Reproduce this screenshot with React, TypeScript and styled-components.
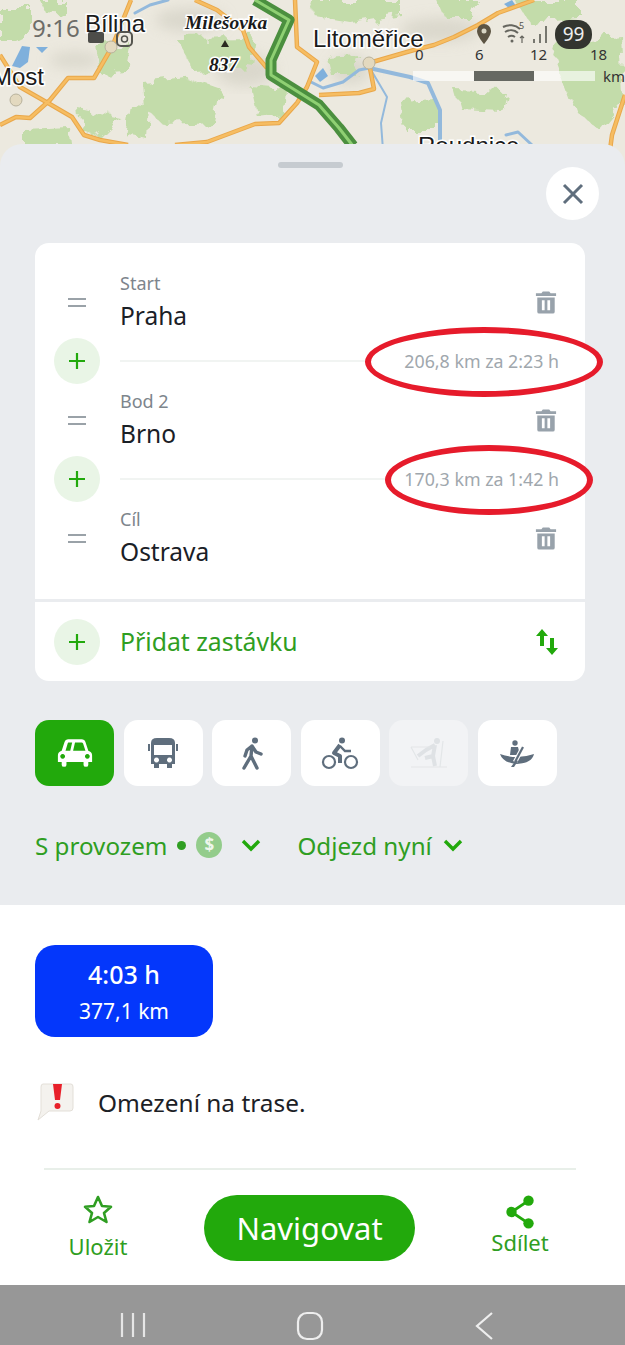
import styled, { createGlobalStyle } from "styled-components";

const GREEN = "#22a90c";
const TEXT_GREEN = "#2f9e22";
const SLATE = "#5f6e7d";

const GlobalStyle = createGlobalStyle`
  html, body {
    margin: 0;
    padding: 0;
    width: 625px;
    height: 1345px;
    overflow: hidden;
    background: #fff;
    font-family: "Noto Sans", "Open Sans", sans-serif;
  }
  * { box-sizing: border-box; }
`;

const Screen = styled.div`
  width: 625px;
  height: 1345px;
  display: flex;
  flex-direction: column;
  overflow: hidden;
`;

const MapArea = styled.div`
  position: relative;
  flex: none;
  height: 144px;
  background: #ece9df;
`;

const MapDrawing = styled.svg`
  display: block;
  width: 625px;
  height: 170px;
`;

const MapLabel = styled.span<{ $x: number; $y: number; $peak?: boolean }>`
  position: absolute;
  left: ${(p) => p.$x}px;
  top: ${(p) => p.$y}px;
  font-family: ${(p) => (p.$peak ? '"Liberation Serif", serif' : '"Liberation Sans", sans-serif')};
  font-size: ${(p) => (p.$peak ? 19.500 : 24)}px;
  font-weight: ${(p) => (p.$peak ? 700 : 400)};
  font-style: ${(p) => (p.$peak ? "italic" : "normal")};
  line-height: 1;
  color: #1b1b1b;
  white-space: nowrap;
  -webkit-text-stroke: 3px #fff;
  paint-order: stroke fill;
`;

const ScaleNumber = styled.span<{ $x: number; $y: number }>`
  position: absolute;
  left: ${(p) => p.$x}px;
  top: ${(p) => p.$y}px;
  font-size: 15px;
  line-height: 1;
  color: #333;
`;

const ScaleBar = styled.div`
  position: absolute;
  left: 413px;
  top: 71px;
  width: 182px;
  height: 10px;
  display: grid;
  grid-template-columns: repeat(3, 1fr);
  background: rgba(255, 255, 255, 0.62);
`;

const ScaleStep = styled.div<{ $dark?: boolean }>`
  background: ${(p) => (p.$dark ? "#666862" : "transparent")};
`;

const Clock = styled.span`
  position: absolute;
  left: 32px;
  top: 15px;
  font-size: 24px;
  line-height: 1.1;
  color: #6d6d68;
`;

const StatusIcons = styled.svg<{ $x: number; $w: number }>`
  position: absolute;
  left: ${(p) => p.$x}px;
  top: 16px;
  width: ${(p) => p.$w}px;
  height: 34px;
`;

const WifiBand = styled.span`
  position: absolute;
  left: 519px;
  top: 21px;
  font-size: 9px;
  line-height: 1;
  color: #55554f;
`;

const Battery = styled.span`
  position: absolute;
  left: 555px;
  top: 20px;
  width: 37px;
  height: 29px;
  border-radius: 14px;
  background: #33352f;
  color: #eee;
  font-size: 19px;
  line-height: 29px;
  text-align: center;
`;

const Sheet = styled.section`
  position: relative;
  flex: none;
  height: 761px;
  padding: 99px 40px 0 35px;
  background: #eaecef;
  border-radius: 22px 22px 0 0;
`;

const Handle = styled.div`
  position: absolute;
  left: 278px;
  top: 18px;
  width: 65px;
  height: 6px;
  border-radius: 3px;
  background: #c6cbd0;
`;

const CloseButton = styled.button`
  position: absolute;
  left: 546px;
  top: 23px;
  width: 53px;
  height: 53px;
  padding: 0;
  border: 0;
  border-radius: 50%;
  background: #fff;
  display: flex;
  align-items: center;
  justify-content: center;
`;

const RouteCard = styled.div`
  width: 550px;
  height: 438px;
  background: #fff;
  border-radius: 14px;
  margin-bottom: 39px;
  display: flex;
  flex-direction: column;
  padding-top: 20px;
`;

const StopRow = styled.div`
  height: 78px;
  padding: 0 28px 0 19px;
  display: flex;
  align-items: center;
`;

const DragColumn = styled.div`
  width: 46px;
  margin-right: 20px;
  display: flex;
  justify-content: center;
`;

const DragHandle = styled.div`
  width: 18px;
  height: 9px;
  border-top: 2px solid #9aa2a8;
  border-bottom: 2px solid #9aa2a8;
`;

const StopText = styled.div`
  flex: 1;
  display: flex;
  flex-direction: column;
  gap: 3px;
`;

const StopCaption = styled.span`
  font-size: 18px;
  line-height: 24px;
  color: #7d858c;
`;

const StopName = styled.span`
  font-size: 24.500px;
  line-height: 36px;
  color: #1a2026;
`;

const ConnectorRow = styled.div`
  height: 40px;
  padding: 0 26px 0 19px;
  display: flex;
  align-items: center;
`;

const AddCircle = styled.div`
  flex: none;
  width: 46px;
  height: 46px;
  border-radius: 50%;
  background: #e9f5e6;
  display: flex;
  align-items: center;
  justify-content: center;
`;

const ConnectorLine = styled.div`
  flex: 1;
  height: 2px;
  margin-left: 20px;
  background: #f1f4f2;
`;

const Distance = styled.div`
  position: relative;
  font-size: 17.800px;
  line-height: 24px;
  color: #a0a7ad;
  white-space: nowrap;
`;

const DistanceText = styled.span`
  position: relative;
`;

const RedRing = styled.div<{ $wide?: boolean }>`
  position: absolute;
  top: -22px;
  left: ${(p) => (p.$wide ? -39 : -19)}px;
  width: ${(p) => (p.$wide ? 238 : 208)}px;
  height: 70px;
  border: 6px solid #e61b2b;
  border-radius: 50%;
  background: #fff;
`;

const CardDivider = styled.div`
  height: 3px;
  margin-top: 22px;
  background: #eaecef;
`;

const AddStopRow = styled.div`
  flex: 1;
  padding: 0 26px 0 19px;
  display: flex;
  align-items: center;
`;

const AddStopLabel = styled.span`
  flex: 1;
  margin-left: 20px;
  margin-top: -2px;
  font-size: 24.800px;
  color: ${TEXT_GREEN};
`;

const ModeRow = styled.div`
  display: flex;
  gap: 9.600px;
  margin-bottom: 40px;
`;

const ModeButton = styled.div<{ $active?: boolean; $disabled?: boolean }>`
  width: 79px;
  height: 66px;
  border-radius: 14px;
  background: ${(p) => (p.$active ? GREEN : p.$disabled ? "#f2f3f5" : "#fff")};
  display: flex;
  align-items: center;
  justify-content: center;
`;

const OptionRow = styled.div`
  display: flex;
  align-items: center;
  height: 38px;
  font-size: 24.200px;
  color: ${TEXT_GREEN};
`;

const OptionGroup = styled.div`
  display: flex;
  align-items: center;
  margin-right: 36px;
`;

const Dot = styled.span`
  width: 9px;
  height: 9px;
  margin: 0 10px;
  border-radius: 50%;
  background: ${TEXT_GREEN};
`;

const Toll = styled.span`
  width: 26px;
  height: 26px;
  border-radius: 50%;
  background: #93cc8b;
  color: #eef6ec;
  font-size: 17px;
  font-weight: 700;
  line-height: 26px;
  text-align: center;
`;

const Chevron = styled.svg<{ $gap: number }>`
  margin-left: ${(p) => p.$gap}px;
`;

const Results = styled.section`
  flex: none;
  height: 265px;
  padding: 40px 48px 0 35px;
  background: #fff;
  display: flex;
  flex-direction: column;
`;

const RouteChip = styled.div`
  width: 178px;
  height: 92px;
  padding-top: 3px;
  border-radius: 20px;
  background: #0437fb;
  color: #fff;
  display: flex;
  flex-direction: column;
  align-items: center;
  justify-content: center;
`;

const ChipTime = styled.span`
  font-size: 25px;
  font-weight: 500;
  line-height: 37px;
`;

const ChipLength = styled.span`
  font-size: 21px;
  line-height: 37px;
`;

const WarningRow = styled.div`
  margin-top: 44px;
  height: 42px;
  display: flex;
  align-items: center;
  gap: 22px;
  font-size: 24.400px;
  color: #1c2126;
`;

const BottomBar = styled.section`
  position: relative;
  flex: none;
  height: 115px;
  padding: 25px 0 0;
  display: grid;
  grid-template-columns: 204px 211px 210px;
  background: #fff;
  &::before {
    content: "";
    position: absolute;
    left: 44px;
    right: 49px;
    top: -2px;
    height: 2px;
    background: #e8efe9;
  }
`;

const BarAction = styled.div<{ $shift: number }>`
  display: flex;
  flex-direction: column;
  align-items: center;
  gap: 8px;
  font-size: 22px;
  line-height: 28px;
  color: ${TEXT_GREEN};
  transform: translateX(${(p) => p.$shift}px);
`;

const ShareIcon = styled.svg`
  margin-bottom: -9px;
`;

const NavigateButton = styled.button`
  height: 66px;
  padding: 0;
  border: 0;
  border-radius: 33px;
  background: ${GREEN};
  color: #fff;
  font-family: inherit;
  font-size: 31px;
`;

const SystemBar = styled.nav`
  flex: none;
  height: 60px;
  padding: 26px 0 0 120px;
  background: #979797;
  display: flex;
  gap: 150px;
  align-items: flex-start;
`;

const Plus = () => (
  <svg width="18" height="18" viewBox="0 0 18 18">
    <path d="M9 1v16M1 9h16" stroke={GREEN} strokeWidth="2.200" fill="none" />
  </svg>
);

const Trash = () => (
  <svg width="22" height="25" viewBox="0 0 24 26">
    <path
      fillRule="evenodd"
      fill="#98a2ab"
      d="M1 3h6l1.500-2h7L17 3h6v3H1zM2.500 7.500h19V23a2 2 0 0 1-2 2h-15a2 2 0 0 1-2-2zM7.500 10.500v11h3v-11zM13.500 10.500v11h3v-11z"
    />
  </svg>
);

const Stop = ({ caption, name }: { caption: string; name: string }) => (
  <StopRow>
    <DragColumn>
      <DragHandle />
    </DragColumn>
    <StopText>
      <StopCaption>{caption}</StopCaption>
      <StopName>{name}</StopName>
    </StopText>
    <Trash />
  </StopRow>
);

const Connector = ({ text, wide }: { text: string; wide?: boolean }) => (
  <ConnectorRow>
    <AddCircle>
      <Plus />
    </AddCircle>
    <ConnectorLine />
    <Distance>
      <RedRing $wide={wide} />
      <DistanceText>{text}</DistanceText>
    </Distance>
  </ConnectorRow>
);

const SmallChevron = ({ gap }: { gap: number }) => (
  <Chevron $gap={gap} width="20" height="13" viewBox="0 0 20 13">
    <path d="M2 2l8 8 8-8" stroke={GREEN} strokeWidth="3.400" fill="none" />
  </Chevron>
);

const MapPicture = () => (
  <MapDrawing viewBox="0 0 625 170">
    <defs>
      <filter id="woods" x="-5%" y="-5%" width="110%" height="110%">
        <feTurbulence type="fractalNoise" baseFrequency="0.07" numOctaves="3" seed="4" />
        <feDisplacementMap in="SourceGraphic" scale="18" />
      </filter>
      <filter id="relief">
        <feGaussianBlur stdDeviation="7" />
      </filter>
    </defs>
    <rect width="625" height="170" fill="#ece9df" />
    <g fill="#d3d0c4" opacity="0.7" filter="url(#relief)">
      <ellipse cx="75" cy="60" rx="26" ry="8" />
      <ellipse cx="245" cy="70" rx="30" ry="16" />
      <ellipse cx="190" cy="20" rx="35" ry="12" />
      <ellipse cx="350" cy="70" rx="20" ry="14" />
      <ellipse cx="440" cy="30" rx="40" ry="12" />
    </g>
    <g fill="#c3dcaa" filter="url(#woods)">
      <path d="M0 7H32V30L12 40H0Z" />
      <path d="M40 0H65V14L45 12Z" />
      <path d="M96 45L131 43L125 72L100 74Z" />
      <path d="M143 82L185 77L222 90L215 122L165 124L145 110Z" />
      <path d="M175 38L255 37L250 68L195 72Z" />
      <path d="M251 87L287 90L285 115L258 118Z" />
      <path d="M310 0H400V14L350 22L315 16Z" />
      <path d="M326 58L360 56L355 74L330 74Z" />
      <path d="M400 102L438 100L438 130L405 130Z" />
      <path d="M438 0H478L470 17H445Z" />
      <path d="M455 90L505 92L500 110L460 108Z" />
      <path d="M550 42L622 36L625 100L600 130L575 110Z" />
      <path d="M80 110L120 118L100 138L82 132Z" />
      <path d="M25 130L70 128L72 144H25Z" />
      <path d="M515 0H580V20L530 24Z" />
      <path d="M130 105L150 108L148 140L125 135Z" />
    </g>
    <g fill="#7fb0dc">
      <path d="M12 66L22 46L30 47L28 62L20 68Z" />
      <path d="M36 47L48 47L42 53Z" />
      <path d="M315 76L323 68L328 76L320 82Z" />
      <path d="M504 4L512 0L516 6L510 9Z" />
    </g>
    <g fill="none" stroke="#93b9dc" strokeLinecap="round" strokeLinejoin="round">
      <path strokeWidth="3" d="M135 13L150 5L168 0" />
      <path strokeWidth="3" d="M311 82L323 88L343 82L359 70L369 68" />
      <path strokeWidth="4" d="M369 68L410 77L428 83L440 110L440 150" />
      <path strokeWidth="2" d="M371 70L387 97L381 123L383 150" />
      <path strokeWidth="3" d="M506 135L518 132L532 145" />
    </g>
    <g fill="none" stroke="#e9a74a" strokeWidth="4.500" strokeLinejoin="round">
      <path d="M131 0L112 47L94 78L68 78L50 100L30 118L16 117L0 125" />
      <path d="M0 55L20 87L48 103L72 117L84 135L100 140L128 145" />
      <path d="M195 0L217 10L243 30L249 47L267 68" />
      <path d="M295 0L297 47L317 62L307 87L297 103L279 123L255 124L207 142L175 145" />
      <path d="M369 63L414 50L434 45L454 37L478 25L498 13L534 0" />
      <path d="M369 63L374 89L359 93L319 95" />
      <path d="M625 95L612 135L610 150" />
    </g>
    <g fill="none" stroke="#f6bd62" strokeWidth="2.500" strokeLinejoin="round">
      <path d="M131 0L112 47L94 78L68 78L50 100L30 118L16 117L0 125" />
      <path d="M0 55L20 87L48 103L72 117L84 135L100 140L128 145" />
      <path d="M195 0L217 10L243 30L249 47L267 68" />
      <path d="M295 0L297 47L317 62L307 87L297 103L279 123L255 124L207 142L175 145" />
      <path d="M369 63L414 50L434 45L454 37L478 25L498 13L534 0" />
      <path d="M369 63L374 89L359 93L319 95" />
      <path d="M625 95L612 135L610 150" />
    </g>
    <g fill="#e3d9bf" stroke="#b8b29c" strokeWidth="1">
      <circle cx="111" cy="47" r="6" />
      <circle cx="16" cy="100" r="6" />
      <circle cx="369" cy="63" r="6" />
    </g>
    <path d="M225 40l4 7h-8z" fill="#2a2a20" />
    <path
      d="M255 0L289 20L271 60L271 75L319 105L339 128L353 146"
      fill="none"
      stroke="#4b8f3f"
      strokeWidth="11"
      strokeLinejoin="round"
    />
    <path
      d="M255 0L289 20L271 60L271 75L319 105L339 128L353 146"
      fill="none"
      stroke="#8fd073"
      strokeWidth="3"
      strokeLinejoin="round"
    />
  </MapDrawing>
);

export default function App() {
  return (
    <Screen>
      <GlobalStyle />
      <MapArea>
        <MapPicture />
        <MapLabel $x={85} $y={12}>Bílina</MapLabel>
        <MapLabel $x={185} $y={13} $peak>Milešovka</MapLabel>
        <MapLabel $x={209} $y={55} $peak>837</MapLabel>
        <MapLabel $x={-8} $y={65}>Most</MapLabel>
        <MapLabel $x={313} $y={27}>Litoměřice</MapLabel>
        <MapLabel $x={418} $y={134}>Roudnice</MapLabel>
        <Clock>9:16</Clock>
        <StatusIcons $x={30} $w={110} viewBox="0 0 110 34">
          <rect x="58" y="16" width="16" height="11" rx="2" fill="#4d4d49" />
          <rect x="87" y="16" width="15" height="14" rx="4" fill="none" stroke="#55554f" strokeWidth="2" />
          <circle cx="94.500" cy="23" r="3" fill="none" stroke="#55554f" strokeWidth="1.500" />
        </StatusIcons>
        <StatusIcons $x={474} $w={80} viewBox="0 0 80 34">
          <path d="M10 8a7 7 0 0 1 7 7c0 5-7 13-7 13s-7-8-7-13a7 7 0 0 1 7-7z" fill="#5c5443" />
          <circle cx="10" cy="15" r="2.500" fill="#d8d5c4" />
          <path d="M29 11a15 15 0 0 1 17 2M31 16a11 11 0 0 1 13 1M34 21a6 6 0 0 1 7 0" stroke="#66665f" strokeWidth="2" fill="none" />
          <circle cx="38" cy="25" r="1.500" fill="#66665f" />
          <path d="M48 27V20M46 22l2-2 2 2" stroke="#66665f" strokeWidth="1.200" fill="none" />
          <path d="M60 27v-4M66 27v-9M72 27v-17" stroke="#77776f" strokeWidth="2" fill="none" />
        </StatusIcons>
        <WifiBand>5</WifiBand>
        <Battery>99</Battery>
        <ScaleNumber $x={415} $y={47}>0</ScaleNumber>
        <ScaleNumber $x={475} $y={47}>6</ScaleNumber>
        <ScaleNumber $x={530} $y={47}>12</ScaleNumber>
        <ScaleNumber $x={590} $y={47}>18</ScaleNumber>
        <ScaleBar>
          <ScaleStep />
          <ScaleStep $dark />
          <ScaleStep />
        </ScaleBar>
        <ScaleNumber $x={603} $y={69}>km</ScaleNumber>
      </MapArea>

      <Sheet>
        <Handle />
        <CloseButton aria-label="Zavřít">
          <svg width="22" height="22" viewBox="0 0 22 22">
            <path d="M2 2l18 18M20 2L2 20" stroke={SLATE} strokeWidth="3" fill="none" />
          </svg>
        </CloseButton>

        <RouteCard>
          <Stop caption="Start" name="Praha" />
          <Connector text="206,8 km za 2:23 h" wide />
          <Stop caption="Bod 2" name="Brno" />
          <Connector text="170,3 km za 1:42 h" />
          <Stop caption="Cíl" name="Ostrava" />
          <CardDivider />
          <AddStopRow>
            <AddCircle>
              <Plus />
            </AddCircle>
            <AddStopLabel>Přidat zastávku</AddStopLabel>
            <svg width="24" height="28" viewBox="0 0 24 28">
              <path d="M7 1l6 7H9v10H5V8H1zM15 10h4v10h4l-6 7-6-7h4z" fill={GREEN} />
            </svg>
          </AddStopRow>
        </RouteCard>

        <ModeRow>
          <ModeButton $active>
            <svg width="38" height="32" viewBox="0 0 40 33">
              <path
                fillRule="evenodd"
                fill="#fff"
                d="M6 14L9 5Q10 2 13 2H27Q30 2 31 5L34 14Q38 15 38 19V26H34V29Q34 31 31.500 31Q29 31 29 29V26H11V29Q11 31 8.500 31Q6 31 6 29V26H2V19Q2 15 6 14ZM10 14H15L17 5.500H13Q12.500 5.500 12.300 6.500ZM18 14H31L28.500 6.500Q28 5.500 27 5.500H20ZM7 17.500a2.500 2.500 0 1 0 .01 0ZM33 17.500a2.500 2.500 0 1 0 .01 0Z"
              />
            </svg>
          </ModeButton>
          <ModeButton>
            <svg width="30" height="32" viewBox="0 0 30 32">
              <path
                fillRule="evenodd"
                fill={SLATE}
                d="M3 6Q3 1 9 1H21Q27 1 27 6V27H24V31H19V27H11V31H6V27H3ZM6 8V18H24V8ZM8.500 20.500a2.500 2.500 0 1 0 .01 0ZM21.500 20.500a2.500 2.500 0 1 0 .01 0Z"
              />
              <path d="M0 7h2v7H0zM28 7h2v7h-2z" fill={SLATE} />
            </svg>
          </ModeButton>
          <ModeButton>
            <svg width="22" height="33" viewBox="0 0 22 33">
              <circle cx="14" cy="3.500" r="3" fill={SLATE} />
              <path
                d="M11 9L6 13L4 19M11 9L15 15L20 17M11 9L10 19L3 31M10 19L16 31"
                stroke={SLATE}
                strokeWidth="3.400"
                strokeLinecap="round"
                strokeLinejoin="round"
                fill="none"
              />
            </svg>
          </ModeButton>
          <ModeButton>
            <svg width="38" height="33" viewBox="0 0 38 33">
              <circle cx="21" cy="3.500" r="3" fill={SLATE} />
              <circle cx="8" cy="25" r="6" stroke={SLATE} strokeWidth="2.200" fill="none" />
              <circle cx="30" cy="25" r="6" stroke={SLATE} strokeWidth="2.200" fill="none" />
              <path d="M19 8L13 16L19 19V26" stroke={SLATE} strokeWidth="4" strokeLinejoin="round" fill="none" />
              <path d="M19 9L24 14H30" stroke={SLATE} strokeWidth="2.400" fill="none" />
            </svg>
          </ModeButton>
          <ModeButton $disabled>
            <svg width="38" height="34" viewBox="0 0 38 34">
              <circle cx="27" cy="5" r="3" fill="#dfe2e5" />
              <path d="M25 9L16 14L8 20M25 9L23 20L25 30M23 20L15 22" stroke="#dfe2e5" strokeWidth="4" strokeLinejoin="round" fill="none" />
              <path d="M1 11H20M1 11L8 24M1 31H37M33 5L30 31" stroke="#e3e6e8" strokeWidth="1.200" fill="none" />
            </svg>
          </ModeButton>
          <ModeButton>
            <svg width="36" height="27" viewBox="0 0 36 27">
              <circle cx="16" cy="3" r="2.700" fill={SLATE} />
              <path d="M12 7H19L21 15H11Z" fill={SLATE} />
              <path d="M1 14Q18 20 35 14Q33 23 18 24Q4 23 1 14Z" fill={SLATE} />
              <path d="M24 7L16 22" stroke="#fff" strokeWidth="4.500" fill="none" />
              <path d="M24 7L16 22" stroke={SLATE} strokeWidth="2.200" fill="none" />
              <path d="M17 20L12 27H15L19 21Z" fill={SLATE} />
            </svg>
          </ModeButton>
        </ModeRow>

        <OptionRow>
          <OptionGroup>
            S provozem
            <Dot />
            <Toll>$</Toll>
            <SmallChevron gap={19} />
          </OptionGroup>
          <OptionGroup>
            Odjezd nyní
            <SmallChevron gap={11} />
          </OptionGroup>
        </OptionRow>
      </Sheet>

      <Results>
        <RouteChip>
          <ChipTime>4:03 h</ChipTime>
          <ChipLength>377,1 km</ChipLength>
        </RouteChip>
        <WarningRow>
          <svg width="41" height="40" viewBox="0 0 41 40">
            <path d="M8 2H36Q38 2 38 5V26Q38 29 35 29H14L3 38L6 29V5Q6 2 8 2Z" fill="#f4f2ee" stroke="#e3dfd8" />
            <path d="M18 2H27L25 18H20Z" fill="#e8202a" />
            <circle cx="22.500" cy="24" r="3" fill="#e8202a" />
          </svg>
          Omezení na trase.
        </WarningRow>
      </Results>

      <BottomBar>
        <BarAction $shift={-4}>
          <svg width="30" height="29" viewBox="0 0 30 29">
            <path
              d="M15 2L19 11L28 11.800L21 18L23.500 27L15 22L6.500 27L9 18L2 11.800L11 11Z"
              fill="none"
              stroke={TEXT_GREEN}
              strokeWidth="2.600"
              strokeLinejoin="round"
            />
          </svg>
          Uložit
        </BarAction>
        <NavigateButton>Navigovat</NavigateButton>
        <BarAction $shift={0}>
          <ShareIcon width="32" height="34" viewBox="0 0 32 36">
            <path d="M25 6L7 18L25 30" stroke={GREEN} strokeWidth="3" fill="none" />
            <circle cx="25" cy="6" r="5.500" fill={GREEN} />
            <circle cx="7" cy="18" r="5.500" fill={GREEN} />
            <circle cx="25" cy="30" r="5.500" fill={GREEN} />
          </ShareIcon>
          Sdílet
        </BarAction>
      </BottomBar>

      <SystemBar>
        <svg width="26" height="28" viewBox="0 0 26 28">
          <path d="M2 2v24M13 2v24M24 2v24" stroke="#e6e6e6" strokeWidth="2.200" fill="none" />
        </svg>
        <svg width="28" height="30" viewBox="0 0 28 30">
          <rect x="2" y="2" width="24" height="26" rx="9" stroke="#eee" strokeWidth="2.200" fill="none" />
        </svg>
        <svg width="20" height="30" viewBox="0 0 20 30">
          <path d="M18 2L3 15L18 28" stroke="#eee" strokeWidth="2.200" fill="none" />
        </svg>
      </SystemBar>
    </Screen>
  );
}
